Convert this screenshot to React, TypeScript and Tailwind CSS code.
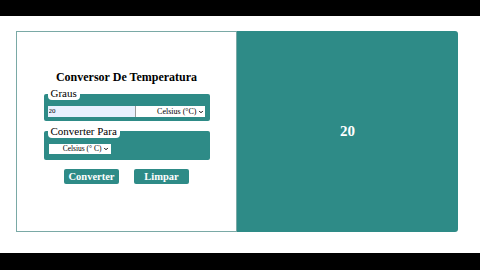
import { ChevronDown } from "lucide-react";

function FakeSelect({
  label,
  className,
}: {
  label: string;
  className: string;
}) {
  return (
    <div
      className={`flex items-center justify-end bg-white text-black ${className}`}
    >
      <span>{label}</span>
      <ChevronDown className="ml-[1px] h-[6px] w-[6px]" strokeWidth={4} />
    </div>
  );
}

export default function App() {
  return (
    <div className="flex h-[270px] w-[480px] flex-col bg-white font-['Liberation_Serif','Times_New_Roman',serif]">
      <div className="h-[16px] bg-black" />
      <div className="flex flex-1 flex-col">
        <div className="ml-[16px] mt-[15px] flex h-[201px] w-[442px]">
          <div className="flex w-[221px] flex-col items-center border border-[#7aa9a6] pt-[38px]">
            <h1 className="font-['Liberation_Serif',serif] text-[12px] font-bold leading-[14px] text-black">
              Conversor De Temperatura
            </h1>

            <fieldset className="mt-[3px] w-[166px] rounded-[2px] border-0 bg-[#2e8b87] px-[4px] pb-[4px]">
              <legend className="rounded-b-[4px] bg-white px-[3px] font-['Liberation_Serif',serif] text-[11px] leading-[13px] text-black">
                Graus
              </legend>
              <div className="mt-[6px] flex h-[11px]">
                <input
                  readOnly
                  value="20"
                  className="h-[11px] w-[87px] bg-[#e8f0fe] px-[1px] font-['Liberation_Serif',serif] text-[7px] leading-[11px] text-black outline-none"
                />
                <FakeSelect
                  label="Celsius (°C)"
                  className="h-[11px] w-[70px] border-l border-[#999] pr-[1px] font-['Liberation_Serif',serif] text-[8px] leading-[11px]"
                />
              </div>
            </fieldset>

            <fieldset className="mt-[3px] w-[166px] rounded-[2px] border-0 bg-[#2e8b87] px-[4px] pb-[6px]">
              <legend className="rounded-b-[4px] bg-white px-[3px] font-['Liberation_Serif',serif] text-[11px] leading-[14px] text-black">
                Converter Para
              </legend>
              <div className="mt-[6px] flex">
                <FakeSelect
                  label="Celsius (° C)"
                  className="ml-[1px] h-[10px] w-[62px] pr-[2px] font-['Liberation_Serif',serif] text-[7.5px] leading-[10px]"
                />
              </div>
            </fieldset>

            <div className="mt-[9px] flex gap-[15px]">
              <button className="h-[15px] w-[55px] rounded-[2px] bg-[#2e8b87] font-['Liberation_Serif',serif] text-[10.5px] font-bold leading-[15px] text-white">
                Converter
              </button>
              <button className="h-[15px] w-[55px] rounded-[2px] bg-[#2e8b87] font-['Liberation_Serif',serif] text-[10.5px] font-bold leading-[15px] text-white">
                Limpar
              </button>
            </div>
          </div>

          <div className="flex w-[221px] items-center justify-center rounded-r-[3px] bg-[#2e8b87]">
            <span className="font-['Liberation_Serif',serif] text-[15px] font-bold text-white">
              20
            </span>
          </div>
        </div>
      </div>
      <div className="h-[17px] bg-black" />
    </div>
  );
}
